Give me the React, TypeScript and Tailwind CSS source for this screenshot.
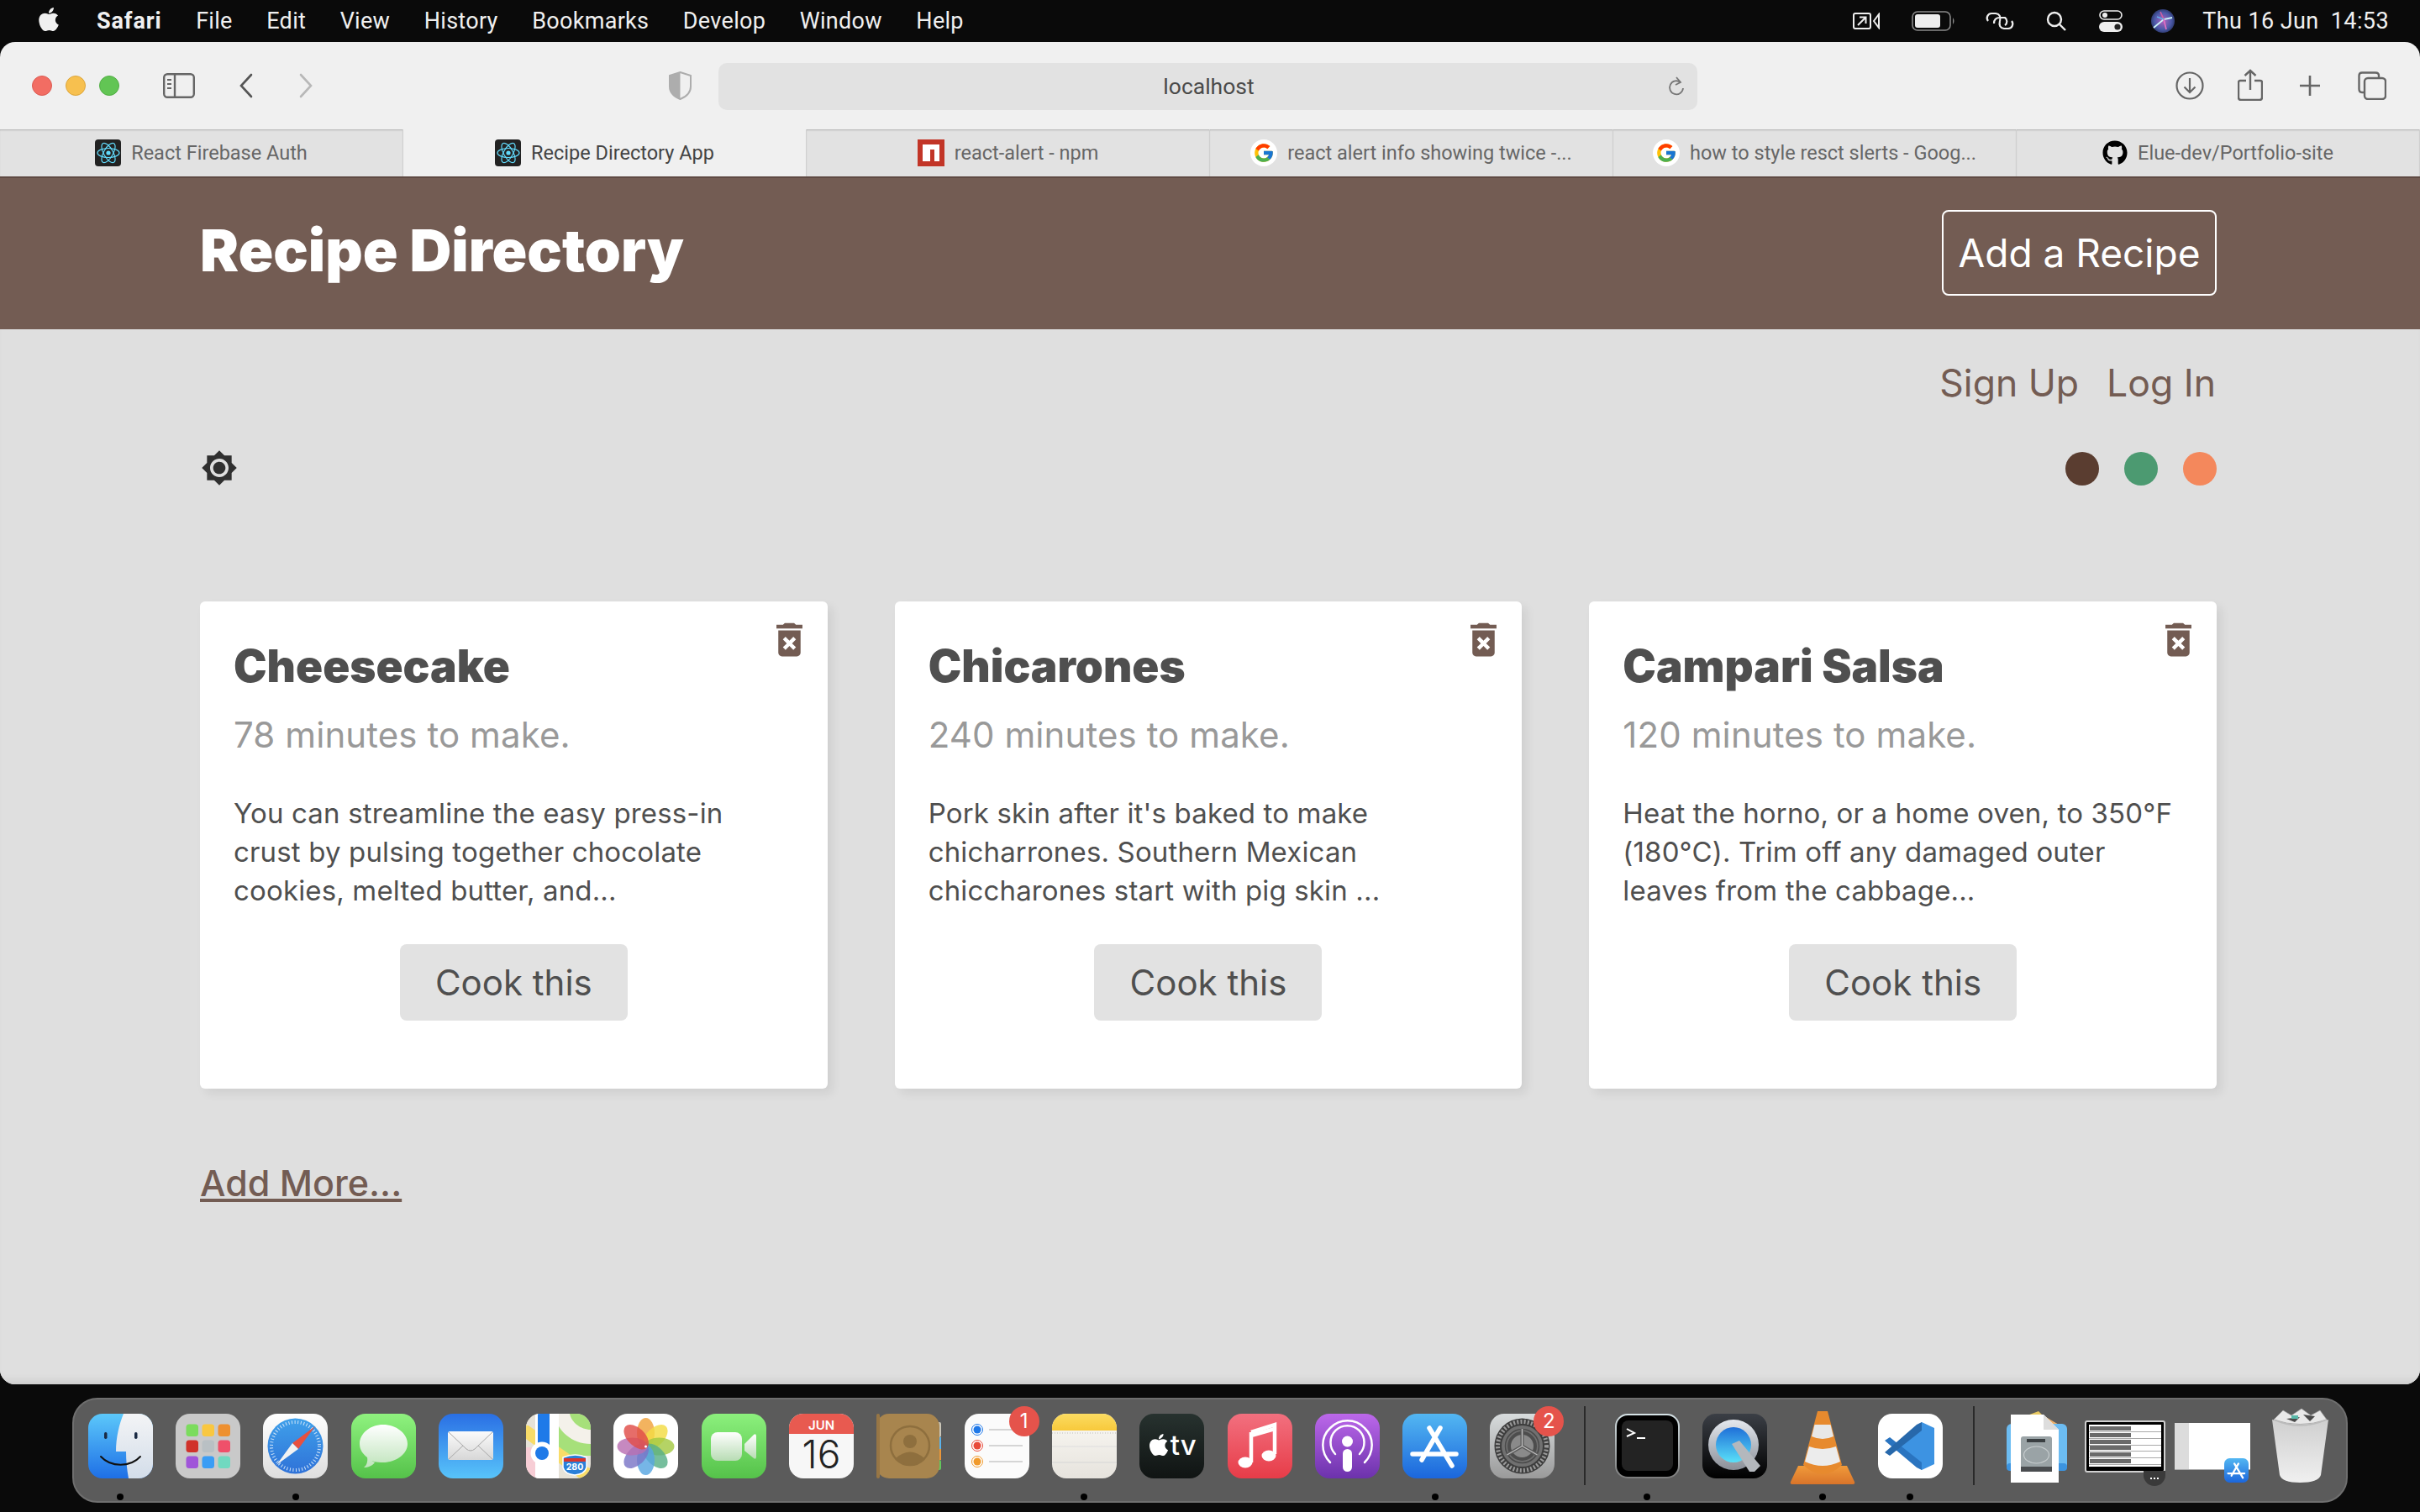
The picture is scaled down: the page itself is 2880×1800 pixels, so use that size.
import React from "react";
import { FaApple, FaGithub } from "react-icons/fa";
import { FcGoogle } from "react-icons/fc";

const G = ({ id, a, b }: { id: string; a: string; b: string }) => (
  <defs>
    <linearGradient id={id} x1="0" y1="0" x2="0" y2="1">
      <stop offset="0" stopColor={a} />
      <stop offset="1" stopColor={b} />
    </linearGradient>
  </defs>
);

const Ico = ({ children }: { children: React.ReactNode }) => (
  <svg width="77" height="77" viewBox="0 0 77 77" className="overflow-visible block">
    {children}
  </svg>
);

const Finder = () => (
  <Ico>
    <G id="fa" a="#5cc8fa" b="#1e6fe6" />
    <G id="fb" a="#f3f4f6" b="#d3dde9" />
    <rect width="77" height="77" rx="17" fill="url(#fa)" />
    <path d="M42 0H60a17 17 0 0 1 17 17V60a17 17 0 0 1-17 17H48C46 66 45 56 45 45H33C33 28 37 12 42 0Z" fill="url(#fb)" />
    <rect x="19" y="22" width="3.5" height="8" rx="1.7" fill="#1a2a44" />
    <rect x="55" y="22" width="3.5" height="8" rx="1.7" fill="#1a2a44" />
    <path d="M15 51C27 64 50 64 62 51" stroke="#111" strokeWidth="2" fill="none" strokeLinecap="round" />
  </Ico>
);
const Launchpad = () => {
  const c = ["#7bdc5d", "#f9c740", "#ee9030", "#d0322a", "#b9c0c4", "#ef506a", "#a055d9", "#3a9df5", "#70d9c0"];
  return (
    <Ico>
      <rect width="77" height="77" rx="17" fill="#c9c9c9" />
      {c.map((f, i) => (
        <rect key={i} x={12.5 + (i % 3) * 19} y={12.5 + Math.floor(i / 3) * 19} width="14.5" height="14.5" rx="3.5" fill={f} />
      ))}
    </Ico>
  );
};
const Safari = () => (
  <Ico>
    <G id="sa" a="#ffffff" b="#dedede" />
    <G id="sb" a="#3fa0ea" b="#2f72d8" />
    <rect width="77" height="77" rx="17" fill="url(#sa)" />
    <circle cx="38.5" cy="38.5" r="33" fill="url(#sb)" />
    <circle cx="38.5" cy="38.5" r="28.5" fill="none" stroke="#cfe4f8" strokeWidth="4" strokeDasharray="1 2.6" />
    <polygon points="62,15 42,42 35,35" fill="#e8503f" />
    <polygon points="16,61 42,42 35,35" fill="#f2f2f2" />
  </Ico>
);
const Messages = () => (
  <Ico>
    <G id="ma" a="#8ff27f" b="#55c24a" />
    <G id="mb" a="#ffffff" b="#bfe4bb" />
    <rect width="77" height="77" rx="17" fill="url(#ma)" />
    <path d="M20 54C25 57 30 58 38 58C53 58 67 48 67 36C67 23 53 13 38 13C23 13 10 23 10 36C10 43 14 48 19 52C20 57 18 62 15 64C20 64 25 62 28 58Z" fill="url(#mb)" />
  </Ico>
);
const Mail = () => (
  <Ico>
    <G id="la" a="#2a6fe4" b="#58c4fa" />
    <G id="lb" a="#fbfbfb" b="#d7d7d7" />
    <rect width="77" height="77" rx="17" fill="url(#la)" />
    <rect x="11" y="21" width="54" height="34" rx="2.5" fill="url(#lb)" />
    <path d="M12 22L33 42Q38 46 43 42L64 22M12 54L29 38M64 54L47 38" stroke="#a8a8a8" strokeWidth="1" fill="none" />
  </Ico>
);
const Maps = () => (
  <Ico>
    <defs>
      <clipPath id="mc"><rect width="77" height="77" rx="17" /></clipPath>
    </defs>
    <g clipPath="url(#mc)">
      <rect width="77" height="77" fill="#e6e2d8" />
      <rect x="30" y="0" width="47" height="50" fill="#a6e07a" />
      <path d="M34 0C36 20 55 36 77 36V19C65 19 54 10 52 0Z" fill="#f4f1ea" />
      <rect x="0" y="40" width="30" height="37" fill="#f7cdd5" />
      <path d="M0 12L77 66V77H64L0 30Z" fill="#f8dc68" />
      <rect x="0" y="0" width="12" height="14" fill="#e6e2d8" />
      <rect x="11" y="0" width="28" height="77" fill="#fff" />
      <rect x="14" y="0" width="14" height="38" fill="#1f7ae8" />
    </g>
    <circle cx="19" cy="47" r="13.5" fill="#fff" />
    <circle cx="19" cy="47" r="8" fill="#1f7ae8" />
    <path d="M44 52Q59 46 72 52V64Q70 72 58 73Q46 72 44 64Z" fill="#2a7fd8" stroke="#fff" strokeWidth="1.5" />
    <rect x="45" y="53" width="26" height="4" fill="#d8342c" />
    <text x="58" y="67" fontSize="10.5" fontWeight="700" fontFamily="Inter, sans-serif" fill="#fff" textAnchor="middle">280</text>
  </Ico>
);
const Photos = () => {
  const c = ["#f0a23c", "#f3dc44", "#a5c943", "#58b088", "#58a6e2", "#7a75c7", "#b96fb2", "#e14d48"];
  return (
    <Ico>
      <rect width="77" height="77" rx="17" fill="#fff" />
      {c.map((f, i) => (
        <ellipse key={i} cx="38.5" cy="23" rx="10.5" ry="18" fill={f} opacity=".82" transform={`rotate(${i * 45} 38.5 39)`} />
      ))}
      <circle cx="38.5" cy="39" r="1.5" fill="#fff" />
    </Ico>
  );
};
const FaceTime = () => (
  <Ico>
    <G id="fta" a="#8cf07d" b="#55c24a" />
    <G id="ftb" a="#ffffff" b="#b8dcb4" />
    <rect width="77" height="77" rx="17" fill="url(#fta)" />
    <rect x="11" y="22" width="37" height="34" rx="8" fill="url(#ftb)" />
    <path d="M51 36L62 25Q65 23 65 27V51Q65 55 62 53L51 44Z" fill="url(#ftb)" />
  </Ico>
);
const Calendar = () => (
  <Ico>
    <defs><clipPath id="cc"><rect width="77" height="77" rx="17" /></clipPath></defs>
    <g clipPath="url(#cc)">
      <rect width="77" height="77" fill="#f7f7f7" />
      <rect width="77" height="24" fill="#e85a50" />
    </g>
    <text x="38.5" y="19" fontSize="15" fontWeight="600" fontFamily="Inter, sans-serif" fill="#fff" textAnchor="middle">JUN</text>
    <text x="38.5" y="65" fontSize="46" fontWeight="300" fontFamily="Inter, sans-serif" fill="#222" textAnchor="middle">16</text>
  </Ico>
);
const Contacts = () => (
  <Ico>
    <rect x="68" y="10" width="9" height="18" rx="2" fill="#c9c5b8" />
    <rect x="68" y="28" width="9" height="14" fill="#5ab2ea" />
    <rect x="68" y="42" width="9" height="13" fill="#e8963a" />
    <rect x="68" y="55" width="9" height="12" rx="2" fill="#63c65c" />
    <rect width="75" height="77" rx="15" fill="#a8854e" />
    <rect width="4" height="77" rx="2" fill="#977645" />
    <circle cx="40" cy="38" r="23" fill="none" stroke="#8e6f3e" strokeWidth="2.5" />
    <circle cx="40" cy="33" r="8" fill="#8e6f3e" />
    <path d="M23 53Q40 38 57 53Q40 68 23 53Z" fill="#8e6f3e" />
  </Ico>
);
const Reminders = () => (
  <Ico>
    <rect width="77" height="77" rx="17" fill="#fbfbfb" />
    {[["#1f78e8", 19], ["#e84a3a", 38], ["#f09a2c", 57]].map(([c, y], i) => (
      <g key={i}>
        <circle cx="15" cy={y as number} r="6.5" fill="#fff" stroke={c as string} strokeWidth="1" />
        <circle cx="15" cy={y as number} r="4.5" fill={c as string} />
        <line x1="29" x2="69" y1={y as number} y2={y as number} stroke="#c8c8c8" strokeWidth="1.4" />
      </g>
    ))}
  </Ico>
);
const Notes = () => (
  <Ico>
    <defs><clipPath id="nc"><rect width="77" height="77" rx="17" /></clipPath></defs>
    <G id="na" a="#fbf9f4" b="#e6e3dd" />
    <G id="nb" a="#fbdc62" b="#f8c93b" />
    <g clipPath="url(#nc)">
      <rect width="77" height="77" fill="url(#na)" />
      <rect width="77" height="20" fill="url(#nb)" />
      <line x1="0" x2="77" y1="23" y2="23" stroke="#bbb" strokeWidth="1.2" strokeDasharray="1 2" />
      <line x1="0" x2="77" y1="39" y2="39" stroke="#ddd" strokeWidth="1.2" />
      <line x1="0" x2="77" y1="58" y2="58" stroke="#d6d6d6" strokeWidth="1.2" />
    </g>
  </Ico>
);
const AppleTV = () => (
  <div className="w-[77px] h-[77px] rounded-[17px] bg-gradient-to-b from-[#27322f] to-[#101413] flex items-center justify-center text-white">
    <FaApple className="w-[26px] h-[30px] -mt-[3px]" />
    <span className="text-[33px] leading-none font-medium font-['Inter'] -mt-[2px] ml-[1px]">tv</span>
  </div>
);
const Music = () => (
  <Ico>
    <G id="mua" a="#f2707f" b="#e73c48" />
    <rect width="77" height="77" rx="17" fill="url(#mua)" />
    <path d="M28 22L56 13V48" fill="none" stroke="#fff" strokeWidth="4.5" />
    <path d="M28 22V58M28 26L56 18" fill="none" stroke="#fff" strokeWidth="4.5" />
    <ellipse cx="21" cy="58" rx="8.5" ry="6.5" fill="#fff" />
    <ellipse cx="49" cy="50" rx="8.5" ry="6.5" fill="#fff" />
  </Ico>
);
const Podcasts = () => (
  <Ico>
    <G id="pa" a="#bc68ea" b="#6c32ac" />
    <rect width="77" height="77" rx="17" fill="url(#pa)" />
    <path d="M18 58A29 29 0 1 1 59 58" fill="none" stroke="#fff" strokeWidth="2.5" strokeLinecap="round" />
    <path d="M24 48A20 20 0 1 1 53 48" fill="none" stroke="#fff" strokeWidth="2.5" strokeLinecap="round" />
    <circle cx="38.5" cy="33" r="6.5" fill="#fff" />
    <rect x="33" y="42" width="11" height="27" rx="5.5" fill="#fff" />
  </Ico>
);
const AppStoreGlyph = () => (
  <>
    <G id="aa" a="#53b7f2" b="#1b66dc" />
    <rect width="77" height="77" rx="17" fill="url(#aa)" />
    <path d="M32 17L59 62M45 17L23 55M12 48H64" stroke="#fff" strokeWidth="5.5" strokeLinecap="round" fill="none" />
  </>
);
const AppStore = () => <Ico><AppStoreGlyph /></Ico>;
const Prefs = () => (
  <Ico>
    <G id="sp" a="#d8dcdd" b="#9a9a9a" />
    <rect width="77" height="77" rx="17" fill="url(#sp)" />
    <circle cx="38.5" cy="38.5" r="33" fill="#3e3e3e" />
    <circle cx="38.5" cy="38.5" r="29" fill="none" stroke="#9a9a9a" strokeWidth="5" strokeDasharray="2 2.2" />
    <circle cx="38.5" cy="38.5" r="24.5" fill="#707070" />
    <circle cx="38.5" cy="38.5" r="20" fill="none" stroke="#4a4a4a" strokeWidth="1.5" />
    <circle cx="38.5" cy="38.5" r="15.5" fill="#8a8a8a" stroke="#4d4d4d" strokeWidth="4" />
    <path d="M38.5 38.5V18M38.5 38.5L20.5 49M38.5 38.5L56.5 49" stroke="#5a5a5a" strokeWidth="4" fill="none" />
    <path d="M38.5 38.5V18M38.5 38.5L20.5 49M38.5 38.5L56.5 49" stroke="#bdbdbd" strokeWidth="1.4" fill="none" />
  </Ico>
);
const Terminal = () => (
  <Ico>
    <G id="ta" a="#d5e2e6" b="#7c7c7c" />
    <rect width="77" height="77" rx="15" fill="url(#ta)" />
    <rect x="2" y="2" width="73" height="73" rx="13" fill="#000" />
    <rect x="8" y="8" width="61" height="60" rx="8" fill="#232323" />
    <path d="M14 18L23 23L14 27" stroke="#fff" strokeWidth="2" fill="none" />
    <line x1="26" y1="29" x2="36" y2="29" stroke="#fff" strokeWidth="2" />
  </Ico>
);
const QuickTime = () => (
  <Ico>
    <G id="qa" a="#3b3f46" b="#000" />
    <G id="qb" a="#e4e8ee" b="#8a8f98" />
    <G id="qc" a="#1f6fd8" b="#5ae0f8" />
    <rect width="77" height="77" rx="16" fill="url(#qa)" />
    <circle cx="37" cy="37" r="30" fill="url(#qb)" />
    <circle cx="37" cy="37" r="21" fill="url(#qc)" />
    <path d="M35 36L44 32L69 62L62 69L56 69Z" fill="#b4b8bd" />
  </Ico>
);
const VLC = () => (
  <svg width="78" height="87" viewBox="0 0 78 87" className="overflow-visible block -mt-[3px]">
    <G id="va" a="#f09a3a" b="#d9742a" />
    <path d="M10 65H68L77 84Q78 87 75 87H3Q0 87 1 84Z" fill="url(#va)" />
    <path d="M33 0H45L62 64Q50 75 39 75Q28 75 16 64Z" fill="#e78a2e" />
    <path d="M29.5 16H48.5L52 30Q39 36 26 30Z" fill="#e8e8e8" />
    <path d="M23 42Q39 48 55 42L60 60Q39 70 18 60Z" fill="#ececec" />
  </svg>
);
const VSCode = () => (
  <Ico>
    <rect width="77" height="77" rx="17" fill="#fff" />
    <path d="M52 10L67 17V60L52 67L26 40Z" fill="#3d93e2" />
    <path d="M8 32L14 28L52 58V67L46 64Z" fill="#2a74c0" />
    <path d="M8 46L14 50L52 20V10L46 13Z" fill="#2768ab" />
  </Ico>
);
const Stack = () => (
  <svg width="72" height="85" viewBox="0 0 72 85" className="overflow-visible block -mt-[3px]">
    <path d="M22 6L38 0L46 8L66 18H20Z" fill="#e8c860" />
    <path d="M42 4L62 16H40Z" fill="#eeb06c" />
    <rect x="0" y="15" width="72" height="56" rx="6" fill="#6cbcf2" />
    <rect x="0" y="62" width="72" height="9" rx="4" fill="#3c94e0" />
    <path d="M5 4H44L62 22V85H5Z" fill="#fff" />
    <path d="M44 4V22H62Z" fill="#ddd" />
    <rect x="17" y="30" width="37" height="42" rx="3" fill="#9aa3a6" />
    <rect x="24" y="33" width="22" height="4" fill="#3a3f42" />
    <ellipse cx="35.5" cy="52" rx="15" ry="10" fill="none" stroke="#c5cbcd" strokeWidth="1.2" />
    <rect x="17" y="66" width="37" height="6" fill="#4a4d50" />
  </svg>
);
const MinWin = () => (
  <div className="relative w-[96px] h-[62px] mt-[8px] border-2 border-[#d0d0d0] rounded-[3px] bg-black p-[3px] pb-[5px]">
    <div className="h-full bg-white flex flex-col justify-between py-[2px]">
      {[0, 1, 2, 3, 4, 5].map((i) => (
        <div key={i} className="flex flex-col gap-[1px]">
          <div className="h-[5px] w-[57%] ml-px bg-[#6a6a6a]" />
          <div className="h-[1px] bg-[#aaa]" />
        </div>
      ))}
    </div>
    <div className="absolute left-[68px] top-[58px] w-[26px] h-[18px] rounded-b-[13px] bg-[#3a3a3a] flex items-center justify-center gap-[2px]">
      <i className="w-[2px] h-[2px] bg-white" /><i className="w-[2px] h-[2px] bg-white" /><i className="w-[2px] h-[2px] bg-white" />
    </div>
  </div>
);
const AppStoreGlyph2 = () => (
  <>
    <G id="ab" a="#53b7f2" b="#1b66dc" />
    <rect width="77" height="77" rx="17" fill="url(#ab)" />
    <path d="M32 17L59 62M45 17L23 55M12 48H64" stroke="#fff" strokeWidth="6" strokeLinecap="round" fill="none" />
  </>
);
const MinWin2 = () => (
  <div className="relative w-[90px] h-[56px] mt-[11px] bg-white flex border-b border-[#aaa]">
    <div className="w-[17px] bg-[#dcdcdc]" />
    <div className="absolute left-[59px] top-[42px]">
      <svg width="29" height="29" viewBox="0 0 77 77" className="block"><AppStoreGlyph2 /></svg>
    </div>
  </div>
);
const Trash = () => (
  <svg width="69" height="89" viewBox="0 0 69 89" className="overflow-visible block -mt-[7px]">
    <G id="tr" a="#cfcfcf" b="#f0f0f0" />
    <path d="M1 14Q34 24 68 14L59 80Q56 89 34 89Q13 89 10 80Z" fill="url(#tr)" />
    <path d="M3 14L14 3L24 9L36 1L47 9L58 3L66 14Q34 25 3 14Z" fill="#e8e8e8" stroke="#a0a0a0" strokeWidth=".7" />
    <path d="M18 13L28 17L34 11ZM38 8L46 16L52 10Z" fill="#4a4a4a" />
    <rect x="24" y="9" width="8" height="4" fill="#58b8a8" />
    <path d="M3 14Q34 28 66 14" fill="none" stroke="#bbb" strokeWidth="1.5" />
  </svg>
);

const Badge = ({ n, cls }: { n: string; cls: string }) => (
  <div className={`absolute w-[36px] h-[36px] rounded-full bg-[#e5534b] text-white text-[24px] leading-[36px] text-center font-['Inter'] ${cls}`}>{n}</div>
);

const Slot = ({ dot, children, w }: { dot?: boolean; children: React.ReactNode; w?: string }) => (
  <div className={`relative h-[103px] flex flex-col items-center justify-start shrink-0 ${w ?? "w-[104.3px]"}`}>
    <div className="relative h-[77px] flex items-start justify-center">{children}</div>
    {dot && <div className="absolute top-[95px] w-[8px] h-[8px] rounded-full bg-black" />}
  </div>
);

const DockSep = ({ w }: { w: string }) => (
  <div className={`${w} h-[94px] -mt-[9px] flex justify-center shrink-0`}>
    <div className="w-[2px] h-full bg-[#2a2a2a]" />
  </div>
);

const Dock = () => (
  <div className="ml-[86px] mt-[16px] w-[2708px] h-[125px] rounded-[30px] bg-[#5b5b5b] border-2 border-[#6f6f6f] pl-[3px] pt-[17px] flex items-start">
    <Slot dot><Finder /></Slot>
    <Slot><Launchpad /></Slot>
    <Slot dot><Safari /></Slot>
    <Slot><Messages /></Slot>
    <Slot><Mail /></Slot>
    <Slot><Maps /></Slot>
    <Slot><Photos /></Slot>
    <Slot><FaceTime /></Slot>
    <Slot><Calendar /></Slot>
    <Slot><Contacts /></Slot>
    <Slot><Reminders /><Badge n="1" cls="-top-[9px] left-[53px]" /></Slot>
    <Slot dot><Notes /></Slot>
    <Slot><AppleTV /></Slot>
    <Slot><Music /></Slot>
    <Slot><Podcasts /></Slot>
    <Slot dot><AppStore /></Slot>
    <Slot><Prefs /><Badge n="2" cls="-top-[9px] left-[52px]" /></Slot>
    <DockSep w="w-[44px]" />
    <Slot dot><Terminal /></Slot>
    <Slot><QuickTime /></Slot>
    <Slot dot><VLC /></Slot>
    <Slot dot><VSCode /></Slot>
    <DockSep w="w-[47px]" />
    <Slot><Stack /></Slot>
    <Slot><MinWin /></Slot>
    <Slot><MinWin2 /></Slot>
    <Slot><Trash /></Slot>
  </div>
);

const MenuBar = () => (
  <div className="h-[50px] bg-[#0a0a0a] text-[#f0f0f0] flex items-center text-[27px] font-['Roboto'] shrink-0">
    <FaApple className="ml-[44px] w-[28px] h-[32px] text-[#f0f0f0] -mt-[4px]" />
    <div className="ml-[43px] flex items-center gap-[40.5px] tracking-[0.3px]">
      <span className="font-bold tracking-[0.9px]">Safari</span>
      <span>File</span>
      <span>Edit</span>
      <span>View</span>
      <span>History</span>
      <span>Bookmarks</span>
      <span>Develop</span>
      <span>Window</span>
      <span>Help</span>
    </div>
    <div className="ml-auto mr-[37px] flex items-center">
      <svg width="32" height="20" viewBox="0 0 32 20" fill="none" stroke="#eee" strokeWidth="2">
        <rect x="1" y="1" width="20" height="18" rx="2" />
        <path d="M6 15L15 6M8 5.5H15.5V13" />
        <path d="M25 10L31 2V18Z" />
      </svg>
      <svg className="ml-[38px]" width="52" height="24" viewBox="0 0 52 24">
        <rect x="1" y="1" width="45" height="22" rx="6" fill="none" stroke="#8a8a8a" strokeWidth="1.6" />
        <rect x="4" y="4" width="30" height="16" rx="3" fill="#eee" />
        <path d="M49 8Q52 12 49 16Z" fill="#8a8a8a" />
      </svg>
      <svg className="ml-[35px]" width="36" height="24" viewBox="0 0 36 24" fill="none" stroke="#eee" strokeWidth="2.2">
        <path d="M18 12Q20 4 13 3H8A5.5 5.5 0 0 0 4 12" />
        <path d="M18 12Q16 20 23 21H28A5.5 5.5 0 0 0 32 12" />
        <path d="M11 15Q11 8 18 8H24A5.5 5.5 0 0 1 24 17" />
      </svg>
      <svg className="ml-[37px]" width="24" height="24" viewBox="0 0 24 24" fill="none" stroke="#eee" strokeWidth="2.4">
        <circle cx="10" cy="10" r="8" />
        <path d="M16 16L23 23" />
      </svg>
      <svg className="ml-[39px]" width="28" height="26" viewBox="0 0 28 26">
        <rect x="1" y="1" width="26" height="10" rx="5" fill="none" stroke="#eee" strokeWidth="1.6" />
        <circle cx="7" cy="6" r="3" fill="#eee" />
        <path d="M6 14H22A6 6 0 0 1 22 26H6A6 6 0 0 1 6 14Z" fill="#eee" />
        <circle cx="22" cy="20" r="3.6" fill="#222" />
      </svg>
      <svg className="ml-[34px]" width="28" height="28" viewBox="0 0 28 28">
        <defs>
          <radialGradient id="si" cx=".5" cy=".5" r=".6">
            <stop offset="0" stopColor="#b060c0" />
            <stop offset=".6" stopColor="#4a5aa8" />
            <stop offset="1" stopColor="#1f2850" />
          </radialGradient>
        </defs>
        <circle cx="14" cy="14" r="14" fill="url(#si)" />
        <path d="M3 22L15 12L25 10" stroke="#cdf4f8" strokeWidth="1.8" fill="none" />
        <path d="M15 12L18 24" stroke="#e070c0" strokeWidth="1.8" fill="none" />
        <path d="M15 12L11 3" stroke="#d060a0" strokeWidth="1.6" fill="none" />
        <path d="M15 12L7 9" stroke="#60b0e8" strokeWidth="1.4" fill="none" />
      </svg>
      <span className="ml-[33px] tracking-[0.4px] whitespace-nowrap">Thu 16 Jun&nbsp;&nbsp;14:53</span>
    </div>
  </div>
);

const Toolbar = () => (
  <div className="h-[104px] flex items-center pl-[38px] text-[#666] shrink-0 relative">
    <div className="flex items-center gap-[16px]">
      <i className="block w-[24px] h-[24px] rounded-full bg-[#f26d63] border border-[#dc5b52]" />
      <i className="block w-[24px] h-[24px] rounded-full bg-[#f7c04f] border border-[#dca63c]" />
      <i className="block w-[24px] h-[24px] rounded-full bg-[#62c554] border border-[#52ae45]" />
    </div>
    <svg className="ml-[52px]" width="38" height="30" viewBox="0 0 38 30" fill="none" stroke="#666" strokeWidth="2.4">
      <rect x="1.2" y="1.2" width="35.6" height="27.6" rx="4" />
      <path d="M14 1V29" />
      <path d="M5 8H10M5 13H10M5 18H10" strokeWidth="2" />
    </svg>
    <svg className="ml-[53px]" width="16" height="30" viewBox="0 0 16 30" fill="none" stroke="#555" strokeWidth="2.6" strokeLinecap="round">
      <path d="M14 2L2 15L14 28" />
    </svg>
    <svg className="ml-[55px]" width="16" height="30" viewBox="0 0 16 30" fill="none" stroke="#b8b8b8" strokeWidth="2.6" strokeLinecap="round">
      <path d="M2 2L14 15L2 28" />
    </svg>
    <svg className="ml-[424px]" width="27" height="34" viewBox="0 0 27 34">
      <path d="M13.5 1L26 5V18Q26 28 13.5 33Q1 28 1 18V5Z" fill="none" stroke="#adadad" strokeWidth="2" />
      <path d="M13.5 1L1 5V18Q1 28 13.5 33Z" fill="#adadad" />
    </svg>
    <div className="ml-[32px] w-[1165px] h-[56px] rounded-[10px] bg-[#e2e2e2] flex items-center justify-center relative mt-[2px]">
      <span className="text-[26.5px] text-[#4a4a4a] font-['Roboto'] ml-[2px]">localhost</span>
      <svg className="absolute right-[15px] top-[15px]" width="20" height="28" viewBox="0 0 20 28" fill="none" stroke="#777" strokeWidth="1.8">
        <path d="M15 8A8 8 0 1 0 18 15" />
        <path d="M10 2L15 8L9 11" />
      </svg>
    </div>
    <svg className="ml-[569px]" width="34" height="34" viewBox="0 0 34 34" fill="none" stroke="#666" strokeWidth="2.2">
      <circle cx="17" cy="17" r="15.5" />
      <path d="M17 8V25M10.5 18.5L17 25L23.5 18.5" />
    </svg>
    <svg className="ml-[40px] -mt-[2px]" width="30" height="38" viewBox="0 0 30 38" fill="none" stroke="#666" strokeWidth="2.4">
      <path d="M10 14H3Q1 14 1 16V34Q1 37 4 37H26Q29 37 29 34V16Q29 14 27 14H20" />
      <path d="M15 25V2M8.5 8L15 2L21.5 8" />
    </svg>
    <svg className="ml-[42px]" width="28" height="28" viewBox="0 0 28 28" stroke="#666" strokeWidth="2.6">
      <path d="M14 2V26M2 14H26" />
    </svg>
    <svg className="ml-[43px]" width="34" height="34" viewBox="0 0 34 34" fill="none" stroke="#666" strokeWidth="2.4">
      <rect x="8" y="8" width="25" height="25" rx="4" />
      <path d="M8 25H5Q1.5 25 1.5 21V5Q1.5 1.5 5 1.5H21Q25 1.5 25 5V8" />
    </svg>
  </div>
);

const ReactFav = () => (
  <div className="w-[31px] h-[32px] rounded-[4px] bg-[#222] flex items-center justify-center shrink-0">
    <svg width="30" height="30" viewBox="0 0 30 30" fill="none" stroke="#61dafb" strokeWidth="1.2">
      <ellipse cx="15" cy="15" rx="13" ry="5.5" />
      <ellipse cx="15" cy="15" rx="13" ry="5.5" transform="rotate(60 15 15)" />
      <ellipse cx="15" cy="15" rx="13" ry="5.5" transform="rotate(120 15 15)" />
      <circle cx="15" cy="15" r="2.6" fill="#61dafb" stroke="none" />
    </svg>
  </div>
);
const NpmFav = () => (
  <svg width="32" height="32" viewBox="0 0 32 32" className="shrink-0">
    <rect width="32" height="32" fill="#c23527" />
    <path d="M6 6H26V26H20V12H15V26H6Z" fill="#fff" />
  </svg>
);
const GFav = () => (
  <div className="w-[32px] h-[32px] rounded-full bg-white flex items-center justify-center shrink-0">
    <FcGoogle className="w-[26px] h-[26px]" />
  </div>
);

const tabs = [
  { t: "React Firebase Auth", i: <ReactFav /> },
  { t: "Recipe Directory App", i: <ReactFav />, active: true },
  { t: "react-alert - npm", i: <NpmFav /> },
  { t: "react alert info showing twice -...", i: <GFav /> },
  { t: "how to style resct slerts - Goog...", i: <GFav /> },
  { t: "Elue-dev/Portfolio-site", i: <FaGithub className="w-[30px] h-[30px] text-black shrink-0" /> },
];

const Tabs = () => (
  <div className="h-[56px] flex shrink-0">
    {tabs.map((x) => (
      <div
        key={x.t}
        className={`flex-1 flex items-center justify-center gap-[12px] text-[23.5px] font-['Roboto'] whitespace-nowrap border-r border-[#cfcfcf] ${
          x.active ? "bg-[#f0f0f0] text-[#444]" : "bg-[#e2e2e2] text-[#666] shadow-[inset_0_2px_2px_-1px_rgba(0,0,0,0.22)]"
        }`}
      >
        {x.i}
        <span className="mt-[2px]">{x.t}</span>
      </div>
    ))}
  </div>
);

const recipes = [
  { title: "Cheesecake", time: "78 minutes to make.", lines: ["You can streamline the easy press-in", "crust by pulsing together chocolate", "cookies, melted butter, and..."] },
  { title: "Chicarones", time: "240 minutes to make.", lines: ["Pork skin after it's baked to make", "chicharrones. Southern Mexican", "chiccharones start with pig skin ..."] },
  { title: "Campari Salsa", time: "120 minutes to make.", lines: ["Heat the horno, or a home oven, to 350°F", "(180°C). Trim off any damaged outer", "leaves from the cabbage..."] },
];

const Card = ({ r }: { r: (typeof recipes)[number] }) => (
  <div className="relative h-[580px] bg-white rounded-[6px] shadow-[6px_6px_12px_rgba(0,0,0,0.07)] px-[40px] pt-[37px] text-[#4f4f4f]">
    <svg className="absolute top-[19px] right-[19px] text-[#735c53]" width="53" height="53" viewBox="0 0 24 24" fill="currentColor">
      <path d="M6 19c0 1.1.9 2 2 2h8c1.1 0 2-.9 2-2V7H6v12zm2.46-7.12l1.41-1.41L12 12.59l2.12-2.12 1.41 1.41L13.41 14l2.12 2.12-1.41 1.41L12 15.41l-2.12 2.12-1.41-1.41L10.59 14l-2.13-2.12zM15.5 4l-1-1h-5l-1 1H5v2h14V4z" />
    </svg>
    <h3 className="text-[53px] leading-[80px] font-black whitespace-nowrap">{r.title}</h3>
    <p className="mt-[12px] text-[42px] leading-[60px] text-[#999] whitespace-nowrap tracking-[0.1px]">{r.time}</p>
    <p className="mt-[40px] text-[33px] leading-[46px] whitespace-nowrap tracking-[0.15px]">
      {r.lines.map((l) => (
        <span key={l} className="block">{l}</span>
      ))}
    </p>
    <div className="mt-[41px] mx-auto w-[271px] h-[91px] rounded-[8px] bg-[#e2e2e2] flex items-center justify-center text-[42px]">Cook this</div>
  </div>
);

export default function App() {
  return (
    <div className="w-[2880px] h-[1800px] bg-[#0a0a0a] flex flex-col overflow-hidden font-['Inter',sans-serif]">
      <MenuBar />
      <div className="h-[1598px] rounded-t-[18px] rounded-b-[18px] overflow-hidden flex flex-col bg-[#f0f0f0] shrink-0">
        <Toolbar />
        <Tabs />
        <div className="flex-1 bg-[#dfdfdf] flex flex-col shadow-[inset_0_-10px_12px_-8px_rgba(0,0,0,0.12)]">
          <header className="h-[182px] bg-[#735c53] border-t-2 border-[#5f4a43] shrink-0 flex items-center justify-between pl-[238px] pr-[242px]">
            <h1 className="text-[69px] font-black text-white whitespace-nowrap -mt-[6px]">Recipe Directory</h1>
            <div className="w-[327px] h-[102px] border-2 border-white rounded-[8px] flex items-center justify-center text-white text-[46px] whitespace-nowrap -mt-[2px]">Add a Recipe</div>
          </header>
          <main className="ml-[238px] w-[2400px] flex-1">
            <div className="pt-[28px] flex justify-end gap-[33px] text-[44.5px] leading-[72px] text-[#735c53] whitespace-nowrap pr-[1px]">
              <span>Sign Up</span>
              <span>Log In</span>
            </div>
            <div className="mt-[44px] h-[48px] flex items-start justify-between">
              <svg className="ml-[1px] -mt-[1px]" width="44" height="44" viewBox="0 0 24 24" fill="#303030">
                <path d="M20 8.69V4h-4.69L12 .69 8.69 4H4v4.69L.69 12 4 15.31V20h4.69L12 23.31 15.31 20H20v-4.69L23.31 12 20 8.69zM12 18c-3.31 0-6-2.69-6-6s2.69-6 6-6 6 2.69 6 6-2.69 6-6 6zm0-10c-2.21 0-4 1.79-4 4s1.79 4 4 4 4-1.79 4-4-1.79-4-4-4z" />
              </svg>
              <div className="flex gap-[30px] mt-[2px]">
                <i className="block w-[40px] h-[40px] rounded-full bg-[#5a3d30]" />
                <i className="block w-[40px] h-[40px] rounded-full bg-[#4c9a71]" />
                <i className="block w-[40px] h-[40px] rounded-full bg-[#f4885c]" />
              </div>
            </div>
            <div className="mt-[132px] grid grid-cols-3 gap-[80px]">
              {recipes.map((r) => (
                <Card key={r.title} r={r} />
              ))}
            </div>
            <a className="block mt-[76px] text-[43px] leading-[72px] font-medium text-[#735c53] underline">Add More...</a>
          </main>
        </div>
      </div>
      <Dock />
    </div>
  );
}
